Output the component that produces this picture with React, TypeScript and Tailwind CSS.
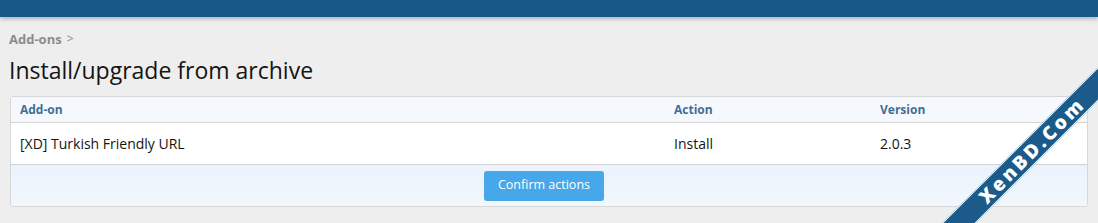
export default function App() {
  return (
    <div className="relative w-[1098px] h-[223px] overflow-hidden bg-[#eeeeee]" style={{ fontFamily: '"Open Sans", "Noto Sans", sans-serif' }}>
      <div className="h-[17px] bg-[#185886] shadow-[0_2px_4px_rgba(0,0,0,0.25)]" />
      <div className="px-[9px]">
        <div className="mt-[14px] h-[16px] flex items-center gap-[5px] text-[13px] font-bold text-[#8c8c8c] leading-none">
          <span>Add-ons</span>
          <span className="font-normal text-[12px]">&gt;</span>
        </div>
        <h1 className="mt-[7px] h-[32px] text-[23px] leading-[32px] font-normal text-[#141414]">
          Install/upgrade from archive
        </h1>
        <div className="mt-[10px] ml-[1px] w-[1078px] border border-[#d8d8d8] rounded-[3px] overflow-hidden">
          <div className="grid grid-cols-[663px_206px_1fr] h-[26px] items-center bg-[#f5f9fd] border-b border-[#d3d3d3] text-[12px] font-bold text-[#3e6f98]">
            <div className="pl-[9px]">Add-on</div>
            <div>Action</div>
            <div>Version</div>
          </div>
          <div className="grid grid-cols-[663px_206px_1fr] h-[42px] items-center bg-white border-b border-[#d3d3d3] text-[14px] text-[#141414]">
            <div className="pl-[9px]">[XD] Turkish Friendly URL</div>
            <div>Install</div>
            <div>2.0.3</div>
          </div>
          <div className="h-[41px] flex items-center justify-center pr-[10px] bg-gradient-to-b from-[#eaf3fc] to-[#f2f7fd]">
            <button className="w-[120px] h-[30px] rounded-[3px] bg-[#47a7eb] text-white text-[12.5px] leading-none">
              Confirm actions
            </button>
          </div>
        </div>
      </div>
      <div className="absolute left-[866px] top-[134px] w-[340px] h-[24px] bg-[#1b5a89] border-y border-white -rotate-45 flex items-center justify-center">
        <span className="text-white font-extrabold text-[19px] tracking-[3px] leading-none ml-[-12px]">XenBD.Com</span>
      </div>
    </div>
  );
}
